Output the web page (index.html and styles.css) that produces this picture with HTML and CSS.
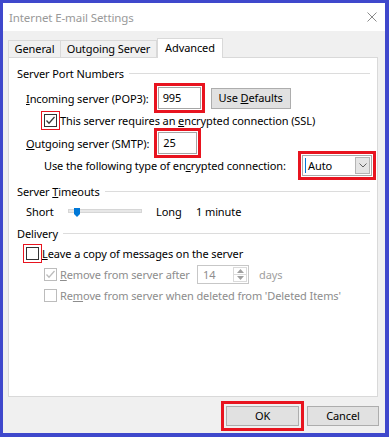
FILE: index.html
```html
<!DOCTYPE html>
<html lang="en">
<head>
<meta charset="UTF-8" />
<meta name="viewport" content="width=device-width, initial-scale=1" />
<title>Internet E-mail Settings</title>
<link rel="stylesheet" href="styles.css">
</head>
<body>

<div class="window">
  <div class="titlebar">
    <span class="title">Internet E-mail Settings</span>
    <svg class="close" width="10" height="10" viewBox="0 0 10 10">
      <path d="M0.5 0.5 L9.5 9.5 M9.5 0.5 L0.5 9.5" stroke="#8a8a8a" stroke-width="1" fill="none" />
    </svg>
  </div>

  <div class="body">
    <div class="tabs">
      <div class="tab t-gen">General</div>
      <div class="tab t-out">Outgoing Server</div>
      <div class="tab t-adv active">Advanced</div>
    </div>

    <div class="panel">
      <div class="group-head"><span>Server Port Numbers</span><i class="rule"></i></div>

      <div class="row r-port r-first">
        <span class="label"><u>I</u>ncoming server (POP3):</span>
        <span class="textbox tb-in mark-thick">995</span>
        <button class="btn defaults">Use <u>D</u>efaults</button>
      </div>

      <div class="row r-ssl">
        <span class="cb mark-thin">
          <svg width="11" height="11" viewBox="0 0 11 11"><path d="M1.5 5.5 L4 8.2 L9.5 2" stroke="#3a3a3a" stroke-width="1.3" fill="none" /></svg>
        </span>
        <span class="cb-text">This server requires an <u>e</u>ncrypted connection (SSL)</span>
      </div>

      <div class="row r-port">
        <span class="label"><u>O</u>utgoing server (SMTP):</span>
        <span class="textbox tb-out mark-thick">25</span>
      </div>

      <div class="row r-enc">
        <span class="label">Use the following type of en<u>c</u>rypted connection:</span>
        <span class="combo mark-thick">
          <span class="caret"></span>
          <span class="combo-text">Auto</span>
          <span class="combo-btn">
            <svg width="8" height="5" viewBox="0 0 8 5"><path d="M0.5 0.5 L4 4 L7.5 0.5" stroke="#606060" stroke-width="1" fill="none" /></svg>
          </span>
        </span>
      </div>

      <div class="group-head gh-time"><span>Server <u>T</u>imeouts</span><i class="rule"></i></div>

      <div class="row r-slider">
        <span class="sl-short">Short</span>
        <span class="track">
          <svg class="thumb" width="6" height="9" viewBox="0 0 6 9"><path d="M0 0 H6 V6 L3 9 L0 6 Z" fill="#0078d7" /></svg>
        </span>
        <span class="sl-long">Long</span>
        <span>1 minute</span>
      </div>

      <div class="group-head gh-del"><span>Delivery</span><i class="rule"></i></div>

      <div class="row r-leave">
        <span class="cb mark-thin"></span>
        <span class="cb-text"><u>L</u>eave a copy of messages on the server</span>
      </div>

      <div class="row r-after disabled">
        <span class="cb">
          <svg width="11" height="11" viewBox="0 0 11 11"><path d="M1.5 5.5 L4 8.2 L9.5 2" stroke="#bcbcbc" stroke-width="1.3" fill="none" /></svg>
        </span>
        <span class="cb-text after-text"><u>R</u>emove from server after</span>
        <span class="spin">
          <span class="spin-val">14</span>
          <span class="spin-btns">
            <span class="spin-half"><svg width="7" height="4" viewBox="0 0 7 4"><path d="M0 4 L3.5 0 L7 4 Z" fill="#a0a0a0" /></svg></span>
            <span class="spin-half"><svg width="7" height="4" viewBox="0 0 7 4"><path d="M0 0 L3.5 4 L7 0 Z" fill="#a0a0a0" /></svg></span>
          </span>
        </span>
        <span class="days">days</span>
      </div>

      <div class="row r-deleted disabled">
        <span class="cb"></span>
        <span class="cb-text">Re<u>m</u>ove from server when deleted from 'Deleted Items'</span>
      </div>
    </div>

    <div class="actions">
      <button class="btn b-ok mark-ok">OK</button>
      <button class="btn b-cancel">Cancel</button>
    </div>
  </div>
</div>

</body>
</html>
```

FILE: styles.css
```css
body {
  margin: 0;
  padding: 0;
  background: #3f48cc;
  font-family: "Noto Sans", "Open Sans", sans-serif;
  font-size: 11px;
  letter-spacing: -0.1px;
  color: #000;
  white-space: nowrap;
}
.window {
  margin: 3px 4px 4px 3px;
  width: 382px;
  height: 430px;
  background: #f0f0f0;
  display: flex;
  flex-direction: column;
}
.titlebar {
  height: 28px;
  background: #fff;
  display: flex;
  align-items: center;
  justify-content: space-between;
  padding: 0 8px 0 6px;
  flex-shrink: 0;
}
.title {
  color: #999;
  font-size: 11.5px;
}
.body {
  flex: 1;
  padding: 7px 7px 0 5px;
  display: flex;
  flex-direction: column;
}

/* tabs */
.tabs {
  display: flex;
  align-items: flex-end;
  height: 19px;
}
.tab {
  box-sizing: border-box;
  height: 17px;
  border: 1px solid #d9d9d9;
  border-bottom: none;
  background: #f0f0f0;
  text-align: center;
  line-height: 15px;
}
.t-gen { width: 53px; }
.t-out { width: 96px; border-left: none; }
.t-adv {
  width: 66px;
  height: 20px;
  margin-bottom: -1px;
  background: #fff;
  position: relative;
  line-height: 17px;
}

/* panel */
.panel {
  box-sizing: border-box;
  height: 340px;
  background: #fff;
  border: 1px solid #d9d9d9;
  padding: 6px 7px 0 8px;
  display: flex;
  flex-direction: column;
}
.group-head {
  height: 18px;
  display: flex;
  align-items: center;
}
.rule {
  flex: 1;
  height: 1px;
  background: #dcdcdc;
  margin-left: 5px;
}
.gh-time { margin-top: 5px; }
.gh-del { margin-top: 4px; }

.row {
  display: flex;
  align-items: center;
}
.r-port {
  height: 22px;
  padding-left: 9px;
}
.r-first { margin-top: 5px; }
.r-ssl {
  height: 23px;
  padding-left: 27px;
}
.r-enc {
  height: 23px;
  padding-left: 27px;
}
.r-slider {
  height: 18px;
  margin-top: 2px;
  padding-left: 9px;
}
.r-leave {
  height: 19px;
  margin-top: 2px;
  padding-left: 9px;
}
.r-after {
  height: 19px;
  margin-top: 2px;
  padding-left: 27px;
}
.r-deleted {
  height: 18px;
  margin-top: 2px;
  padding-left: 27px;
}
.disabled { color: #8d8d8d; }

/* red markers */
.mark-thick {
  outline: 3px solid #e8141f;
  outline-offset: 1px;
}
.mark-thin {
  outline: 1px solid #e8141f;
  outline-offset: 2px;
}
.mark-ok {
  outline: 3px solid #e8141f;
  outline-offset: 2px;
}

/* controls */
.textbox {
  box-sizing: border-box;
  height: 22px;
  border: 1px solid #a5a5a5;
  background: #fff;
  padding-left: 4px;
  line-height: 20px;
  margin-left: 9px;
}
.tb-in { width: 43px; }
.tb-out { width: 39px; }
.btn {
  box-sizing: border-box;
  font: inherit;
  letter-spacing: inherit;
  color: #000;
  background: #e1e1e1;
  border: 1px solid #adadad;
  padding: 0;
  height: 20px;
  line-height: 18px;
}
.defaults {
  width: 80px;
  height: 21px;
  margin-left: 10px;
}
.cb {
  box-sizing: border-box;
  width: 13px;
  height: 13px;
  border: 1px solid #333;
  background: #fff;
  display: flex;
  align-items: center;
  justify-content: center;
  flex-shrink: 0;
}
.disabled .cb { border-color: #bcbcbc; }
.cb-text { margin-left: 3px; }
.after-text { width: 137px; }

.combo {
  box-sizing: border-box;
  width: 70px;
  height: 21px;
  margin-left: auto;
  margin-right: -2px;
  border: 1px solid #a9a9a9;
  background: #fff;
  display: flex;
  align-items: center;
}
.caret {
  width: 1px;
  height: 15px;
  background: #0078d7;
  margin-left: 2px;
}
.combo-text { margin-left: 2px; }
.combo-btn {
  box-sizing: border-box;
  width: 15px;
  height: 17px;
  margin-left: auto;
  margin-right: 1px;
  background: #e5e5e5;
  border: 1px solid #b5b5b5;
  display: flex;
  align-items: center;
  justify-content: center;
}

/* slider */
.sl-short { width: 42px; }
.track {
  box-sizing: border-box;
  position: relative;
  width: 74px;
  height: 4px;
  background: #e7e7e7;
  border: 1px solid #d6d6d6;
}
.thumb {
  position: absolute;
  left: 5px;
  top: -2px;
}
.sl-long {
  width: 40px;
  margin-left: 14px;
}

/* spinner */
.spin {
  box-sizing: border-box;
  width: 52px;
  height: 19px;
  border: 1px solid #c7c7c7;
  background: #fff;
  display: flex;
  align-items: center;
}
.spin-val {
  padding-left: 5px;
  color: #8d8d8d;
}
.spin-btns {
  margin-left: auto;
  margin-right: 1px;
  width: 14px;
  height: 15px;
  display: flex;
  flex-direction: column;
  border: 1px solid #dadada;
  box-sizing: border-box;
}
.spin-half {
  flex: 1;
  display: flex;
  align-items: center;
  justify-content: center;
}
.spin-half + .spin-half { border-top: 1px solid #dadada; }
.days {
  margin-left: 10px;
  color: #a0a0a0;
}

/* bottom buttons */
.actions {
  display: flex;
  justify-content: flex-end;
  gap: 8px;
  padding-top: 9px;
  margin-right: -1px;
}
.b-ok { width: 73px; }
.b-cancel { width: 72px; }
```
